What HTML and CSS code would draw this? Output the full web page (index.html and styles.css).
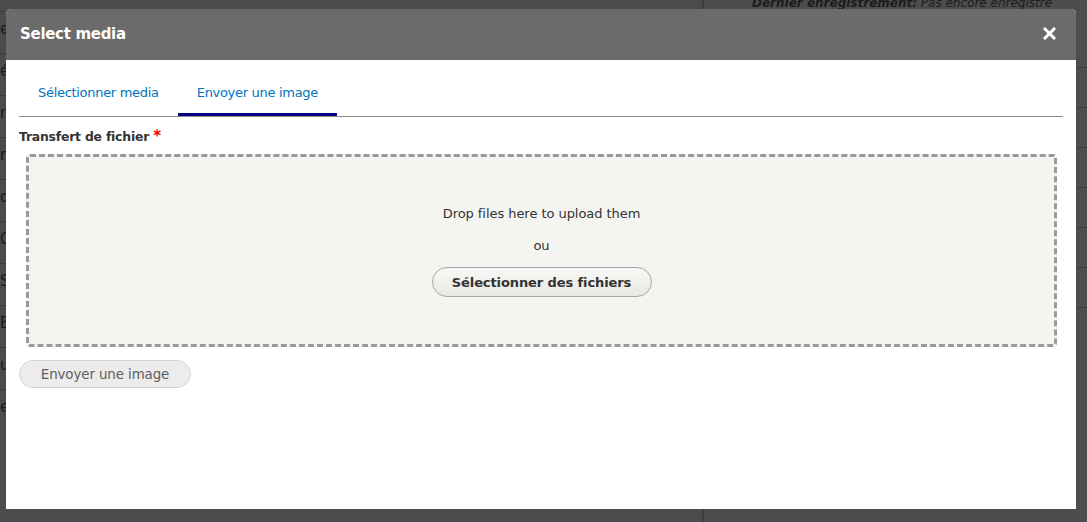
FILE: index.html
```html
<!DOCTYPE html>
<html lang="fr">
<head>
<meta charset="utf-8">
<title>Select media</title>
<link rel="stylesheet" href="styles.css">
</head>
<body>
<div class="page">
  <div class="page-left">
    <div class="prow r1">e</div>
    <div class="prow r2">é</div>
    <div class="prow r3">n</div>
    <div class="prow r4">n</div>
    <div class="prow r5">q</div>
    <div class="prow r6">O</div>
    <div class="prow r7">S</div>
    <div class="prow r8">E</div>
    <div class="prow r9">u</div>
    <div class="prow r10">e</div>
  </div>
  <div class="page-right">
    <div class="meta"><em>Dernier enregistrement:</em> Pas encore enregistré</div>
    <div class="rrow"></div>
    <div class="rrow"></div>
    <div class="rrow"></div>
    <div class="rrow"></div>
    <div class="rrow"></div>
    <div class="rrow"></div>
  </div>
</div>

<div class="dialog" role="dialog">
  <div class="dialog-header">
    <span class="dialog-title">Select media</span>
    <button class="dialog-close" aria-label="Close">
      <svg width="13" height="13" viewBox="0 0 13 13"><path d="M2 2 L11 11 M11 2 L2 11" stroke="#fff" stroke-width="3" stroke-linecap="square"/></svg>
    </button>
  </div>
  <div class="dialog-body">
    <ul class="tabs">
      <li class="tab"><a href="#">Sélectionner media</a></li>
      <li class="tab active"><a href="#">Envoyer une image</a></li>
    </ul>
    <label class="field-label">Transfert de fichier <span class="req">*</span></label>
    <div class="dropzone">
      <p class="drop-text">Drop files here to upload them</p>
      <p class="drop-or">ou</p>
      <button class="btn-select">Sélectionner des fichiers</button>
    </div>
    <button class="btn-upload" disabled>Envoyer une image</button>
  </div>
</div>
</body>
</html>
```

FILE: styles.css
```css
* { box-sizing: border-box; }
html, body { margin: 0; padding: 0; }
body {
  width: 1087px;
  height: 522px;
  overflow: hidden;
  background: #4b4b4b;
  font-family: "DejaVu Sans", "Lucida Grande", sans-serif;
  position: relative;
}

/* dimmed page behind the dialog */
.page {
  display: flex;
  height: 522px;
}
.page-left {
  width: 704px;
  border-right: 2px solid #3e3e3e;
  padding-top: 11px;
  color: #1a1a1a;
  font-size: 15px;
}
.prow {
  border-top: 1px solid #3a3a3a;
  height: 42px;
  padding-top: 8px;
}
.page-right {
  flex: 1;
  padding-left: 48px;
  background: #4d4d4d;
}
.meta {
  font-size: 12px;
  color: #1c1c1c;
  margin-top: -4px;
  height: 72px;
  border-bottom: 1px solid #3a3a3a;
  font-style: italic;
  white-space: nowrap;
}
.meta em { font-weight: bold; }
.rrow {
  height: 40px;
  border-bottom: 1px solid #3a3a3a;
}

/* dialog */
.dialog {
  position: absolute;
  left: 6px;
  top: 9px;
  width: 1070px;
  height: 500px;
  background: #fff;
  border-radius: 5px 5px 0 0;
  overflow: hidden;
}
.dialog-header {
  height: 51px;
  background: #6b6b6b;
  display: flex;
  align-items: center;
  justify-content: space-between;
  padding: 0 14px 0 14px;
}
.dialog-title {
  color: #fff;
  font-weight: bold;
  font-size: 15px;
  letter-spacing: -0.3px;
  margin-top: -1px;
}
.dialog-close {
  background: none;
  border: 0;
  padding: 0;
  width: 13px;
  height: 13px;
  display: flex;
  margin-right: 6px;
  margin-top: -2px;
}

.dialog-body {
  padding: 0 13px;
}
.tabs {
  list-style: none;
  margin: 0;
  padding: 0;
  display: flex;
  border-bottom: 1px solid #8c8c8c;
  height: 57px;
}
.tab a {
  display: block;
  padding: 25px 19px 0 19px;
  height: 56px;
  color: #0074bd;
  text-decoration: none;
  font-size: 13px;
  letter-spacing: -0.3px;
}
.tab.active a {
  border-bottom: 3px solid #000080;
}

.field-label {
  display: block;
  margin-top: 10px;
  font-size: 12.4px;
  font-weight: bold;
  color: #333;
  letter-spacing: -0.2px;
  height: 18px;
}
.req { color: #e00; font-size: 15px; }

.dropzone {
  margin: 9px 6px 0 7px;
  height: 193px;
  background: #f4f4f0;
  border: 3px dashed #9a9a9a;
  border-radius: 4px;
  display: flex;
  flex-direction: column;
  align-items: center;
  padding-top: 49px;
}
.drop-text, .drop-or {
  margin: 0;
  font-size: 13px;
  color: #333;
  letter-spacing: -0.05px;
}
.drop-or { margin-top: 17px; }
.btn-select {
  margin-top: 14px;
  height: 30px;
  width: 220px;
  border-radius: 15px;
  border: 1px solid #a6a6a6;
  background: linear-gradient(#f8f8f6, #e8e8e4);
  font-family: inherit;
  font-size: 13px;
  font-weight: bold;
  color: #333;
  letter-spacing: -0.1px;
}
.btn-upload {
  margin-top: 13px;
  width: 172px;
  height: 28px;
  border-radius: 14px;
  border: 1px solid #d4d4d4;
  background: #ececec;
  font-family: inherit;
  font-size: 13.4px;
  color: #5e5e5e;
  letter-spacing: -0.1px;
}
```
